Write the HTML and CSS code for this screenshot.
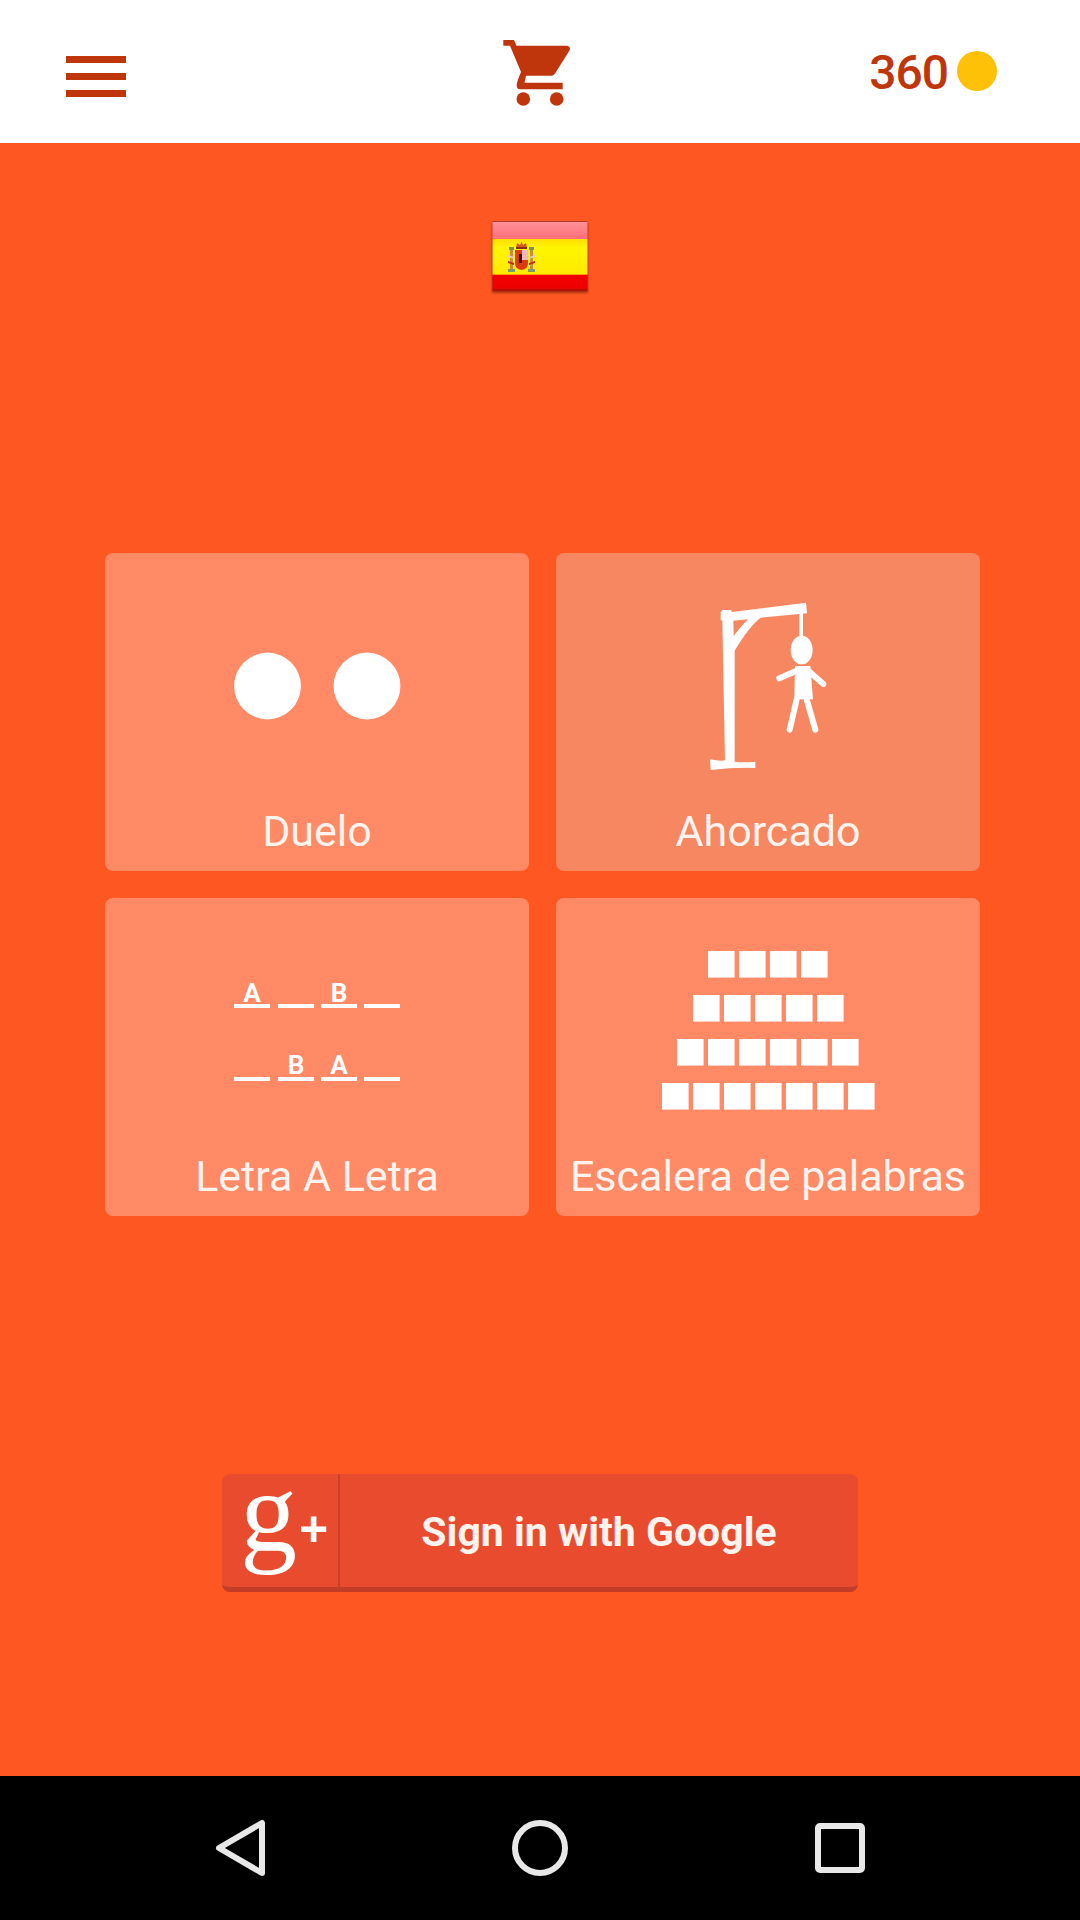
FILE: index.html
```html
<!DOCTYPE html>
<html lang="es">
<head>
    <meta charset="UTF-8">
    <meta name="viewport" content="width=device-width, initial-scale=1.0">
    <title>Ahorcado</title>
    <link rel="stylesheet" href="styles.css">
</head>
<body>
    <div class="app">
        <header class="topbar">
            <div class="menu-icon"><span></span><span></span><span></span></div>
            <svg class="cart-icon" width="100" height="85" viewBox="0 0 100 85">
                <path d="M13.3 10H24L26.5 15.7H77Q81 16.5 79.5 20.5L65 43.5Q63.5 45.7 61.5 45.7H36L34.5 52.7H72.7V59.3H30Q26.5 59.3 26.7 55Q26.7 52 31 42L20 15.7H13.3Z" fill="#bf360c"/>
                <circle cx="33.3" cy="69" r="6.8" fill="#bf360c"/>
                <circle cx="66.7" cy="69" r="6.8" fill="#bf360c"/>
            </svg>
            <div class="coins">
                <span class="coin-count">360</span>
                <span class="coin"></span>
            </div>
        </header>

        <main class="content">
            <svg class="flag" width="96" height="72" viewBox="0 0 96 72">
                <defs>
                    <linearGradient id="flagTop" x1="0" y1="0" x2="0" y2="1">
                        <stop offset="0" stop-color="#ff9097"/>
                        <stop offset="1" stop-color="#ff6e78"/>
                    </linearGradient>
                    <linearGradient id="flagMid" x1="0" y1="0" x2="0" y2="1">
                        <stop offset="0" stop-color="#ffdc00"/>
                        <stop offset="0.25" stop-color="#fff600"/>
                        <stop offset="1" stop-color="#ffe900"/>
                    </linearGradient>
                    <linearGradient id="flagLow" x1="0" y1="0" x2="0" y2="1">
                        <stop offset="0" stop-color="#f30000"/>
                        <stop offset="0.8" stop-color="#ee0000"/>
                        <stop offset="1" stop-color="#a81408"/>
                    </linearGradient>
                </defs>
                <rect x="0" y="0" width="96" height="70" rx="1.5" fill="#b03a30"/>
                <rect x="0.5" y="1" width="95" height="17" fill="url(#flagTop)"/>
                <rect x="0.5" y="18" width="95" height="35" fill="url(#flagMid)"/>
                <rect x="0.5" y="53" width="95" height="17" fill="url(#flagLow)"/>
                <rect x="0.5" y="53" width="95" height="1" fill="#f9a000"/>
                <!-- coat of arms -->
                <path d="M24 27L25 22L28 24L29.5 20.5L31 24L34 22L35 27Z" fill="#d9561c"/>
                <rect x="24" y="26" width="11" height="2" fill="#8a2a1a"/>
                <path d="M23 29H36V42Q36 48 29.5 49Q23 48 23 42Z" fill="#dc3a10"/>
                <rect x="30" y="29" width="6" height="10" fill="#f7b4c2"/>
                <rect x="27" y="33" width="3" height="9" fill="#32160e"/>
                <rect x="18" y="28" width="3" height="20" fill="#c98a52"/>
                <rect x="38" y="28" width="3" height="20" fill="#c98a52"/>
                <rect x="17" y="26" width="5" height="3" fill="#7d8f5a"/>
                <rect x="37" y="26" width="5" height="3" fill="#7d8f5a"/>
                <path d="M16 34L22 36V38L16 36ZM43 34L37 36V38L43 36Z" fill="#e8c8c0"/>
                <path d="M16 40L22 42V44L16 42ZM43 40L37 42V44L43 42Z" fill="#c8281a"/>
                <rect x="16" y="48" width="7" height="3" fill="#7d9a6a"/>
                <rect x="36" y="48" width="7" height="3" fill="#7d9a6a"/>
            </svg>

            <section class="modes">
                <div class="card">
                    <svg class="card-art" viewBox="0 0 424 252">
                        <circle cx="162.5" cy="133" r="33.4" fill="#fff"/>
                        <circle cx="262" cy="133" r="33.4" fill="#fff"/>
                    </svg>
                    <div class="card-label">Duelo</div>
                </div>
                <div class="card card-dim">
                    <svg class="card-art" viewBox="0 0 424 252">
                        <g transform="translate(124 27) scale(0.3333)" fill="#fff">
                            <path d="M90 538Q120 544 135 541L127 122L122 120V95L128 90H153L156 96L378 68L381 100L242 113Q208 138 164 212L164 545Q190 548 226 545V564Q160 562 92 570Z"/>
                            <path d="M160 122L204 118Q183 138 161 168Z" fill="#f78761"/>
                            <rect x="358" y="98" width="11" height="76"/>
                            <ellipse cx="365" cy="210" rx="33" ry="43"/>
                            <path d="M345 258H391L399 358H343Z"/>
                            <path d="M298 295L350 272M385 272L430 312M350 358L329 449M380 358L406 449" stroke="#fff" stroke-width="18" stroke-linecap="round" fill="none"/>
                        </g>
                    </svg>
                    <div class="card-label">Ahorcado</div>
                </div>
                <div class="card">
                    <svg class="card-art" viewBox="0 0 424 252">
                        <g fill="#fff">
                            <rect x="129" y="106" width="36" height="4"/>
                            <rect x="173" y="106" width="36" height="4"/>
                            <rect x="216" y="106" width="36" height="4"/>
                            <rect x="259" y="106" width="36" height="4"/>
                            <rect x="129" y="179" width="36" height="4"/>
                            <rect x="173" y="179" width="36" height="4"/>
                            <rect x="216" y="179" width="36" height="4"/>
                            <rect x="259" y="179" width="36" height="4"/>
                            <text class="tile" x="147" y="104">A</text>
                            <text class="tile" x="234" y="104">B</text>
                            <text class="tile" x="191" y="176">B</text>
                            <text class="tile" x="234" y="176">A</text>
                        </g>
                    </svg>
                    <div class="card-label">Letra A Letra</div>
                </div>
                <div class="card">
                    <svg class="card-art" viewBox="0 0 424 252">
                        <defs>
                            <rect id="step" width="26.6" height="26.6" fill="#fff"/>
                        </defs>
                        <use href="#step" x="152" y="53"/><use href="#step" x="183" y="53"/><use href="#step" x="214" y="53"/><use href="#step" x="245" y="53"/>
                        <use href="#step" x="137" y="97"/><use href="#step" x="168" y="97"/><use href="#step" x="199" y="97"/><use href="#step" x="230" y="97"/><use href="#step" x="261" y="97"/>
                        <use href="#step" x="121" y="141"/><use href="#step" x="152" y="141"/><use href="#step" x="183" y="141"/><use href="#step" x="214" y="141"/><use href="#step" x="245" y="141"/><use href="#step" x="276" y="141"/>
                        <use href="#step" x="106" y="185"/><use href="#step" x="137" y="185"/><use href="#step" x="168" y="185"/><use href="#step" x="199" y="185"/><use href="#step" x="230" y="185"/><use href="#step" x="261" y="185"/><use href="#step" x="292" y="185"/>
                    </svg>
                    <div class="card-label">Escalera de palabras</div>
                </div>
            </section>

            <div class="google-btn">
                <div class="google-mark"><span class="google-g">g</span><span class="google-plus">+</span></div>
                <div class="google-text">Sign in with Google</div>
            </div>
        </main>

        <nav class="navbar">
            <svg width="120" height="60" viewBox="0 0 120 60">
                <path d="M82 5V55L39 30Z" fill="none" stroke="#e8e8e8" stroke-width="6" stroke-linejoin="round"/>
            </svg>
            <svg width="120" height="60" viewBox="0 0 120 60">
                <circle cx="60" cy="30" r="25" fill="none" stroke="#e8e8e8" stroke-width="6"/>
            </svg>
            <svg width="120" height="60" viewBox="0 0 120 60">
                <rect x="38" y="8" width="44" height="44" rx="2" fill="none" stroke="#e8e8e8" stroke-width="6"/>
            </svg>
        </nav>
    </div>
</body>
</html>
```

FILE: styles.css
```css
body {
    margin: 0;
    font-family: Roboto, "Liberation Sans", sans-serif;
    background-color: #000;
}
.app {
    width: 1080px;
    height: 1920px;
    display: flex;
    flex-direction: column;
    overflow: hidden;
}

/* top bar */
.topbar {
    height: 143px;
    background-color: #fff;
    display: grid;
    grid-template-columns: 1fr 100px 1fr;
    align-items: center;
}
.menu-icon {
    width: 60px;
    margin-left: 66px;
    margin-top: 10px;
    display: flex;
    flex-direction: column;
    gap: 10px;
}
.menu-icon span {
    display: block;
    height: 7px;
    background-color: #bf360c;
}
.cart-icon {
    display: block;
    margin-top: 1px;
}
.coins {
    justify-self: end;
    margin-right: 83px;
    margin-bottom: 1px;
    display: flex;
    align-items: center;
    gap: 9px;
}
.coin-count {
    font-size: 48px;
    font-weight: 500;
    letter-spacing: -1px;
    line-height: 54px;
    margin-top: 3px;
    color: #bf360c;
}
.coin {
    width: 40px;
    height: 40px;
    border-radius: 50%;
    background-color: #ffc107;
}

/* main area */
.content {
    flex: 1;
    background-color: #ff5722;
    display: flex;
    flex-direction: column;
    align-items: center;
}
.flag {
    display: block;
    margin-top: 78px;
    filter: drop-shadow(0 2px 1px rgba(90, 20, 0, 0.55));
}
.modes {
    margin-top: 260px;
    margin-left: 5px;
    display: grid;
    grid-template-columns: 424px 424px;
    grid-auto-rows: 318px;
    gap: 27px;
}
.card {
    background-color: #ff8a65;
    border-radius: 8px;
    display: flex;
    flex-direction: column;
}
.card-dim {
    background-color: #f78761;
}
.card-art {
    display: block;
    width: 424px;
    height: 252px;
}
.card-label {
    height: 66px;
    line-height: 53px;
    font-size: 43px;
    color: #fff3ee;
    text-align: center;
    white-space: nowrap;
}
.tile {
    font-family: Roboto, sans-serif;
    font-size: 26px;
    font-weight: 700;
    text-anchor: middle;
}

/* google button */
.google-btn {
    margin-top: 258px;
    width: 636px;
    height: 113px;
    background-color: #e94b2e;
    border-bottom: 5px solid #c23c28;
    border-radius: 8px;
    display: flex;
}
.google-mark {
    width: 116px;
    border-right: 2px solid #c8402a;
    display: flex;
    align-items: flex-start;
}
.google-g {
    font-family: "Liberation Serif", serif;
    font-size: 114px;
    line-height: 78px;
    color: #fff;
    margin-left: 18px;
}
.google-plus {
    font-family: "Liberation Sans", sans-serif;
    font-size: 50px;
    font-weight: 700;
    line-height: 60px;
    color: #fff;
    margin-left: 2px;
    margin-top: 25px;
}
.google-text {
    flex: 1;
    text-align: center;
    font-size: 41px;
    font-weight: 700;
    line-height: 116px;
    color: #fff3ee;
}

/* android nav */
.navbar {
    height: 144px;
    background-color: #000;
    padding: 0 180px;
    display: flex;
    justify-content: space-between;
    align-items: center;
}
```
